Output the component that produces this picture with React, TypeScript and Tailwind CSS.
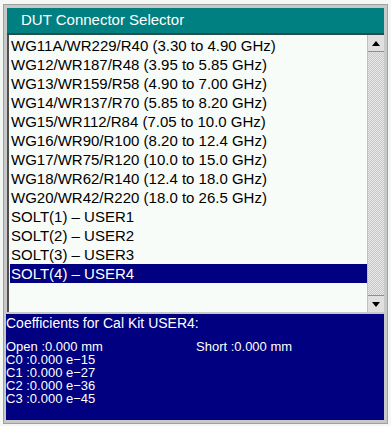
import React from "react";

const items = [
  "WG11A/WR229/R40 (3.30 to 4.90 GHz)",
  "WG12/WR187/R48 (3.95 to 5.85 GHz)",
  "WG13/WR159/R58 (4.90 to 7.00 GHz)",
  "WG14/WR137/R70 (5.85 to 8.20 GHz)",
  "WG15/WR112/R84 (7.05 to 10.0 GHz)",
  "WG16/WR90/R100 (8.20 to 12.4 GHz)",
  "WG17/WR75/R120 (10.0 to 15.0 GHz)",
  "WG18/WR62/R140 (12.4 to 18.0 GHz)",
  "WG20/WR42/R220 (18.0 to 26.5 GHz)",
  "SOLT(1) \u2013 USER1",
  "SOLT(2) \u2013 USER2",
  "SOLT(3) \u2013 USER3",
  "SOLT(4) \u2013 USER4",
];

const coeffs = [
  "C0 :0.000 e\u221215",
  "C1 :0.000 e\u221227",
  "C2 :0.000 e\u221236",
  "C3 :0.000 e\u221245",
];

export default function App() {
  return (
    <div
      className="w-[391px] h-[426px] bg-[#f4f8f4] pt-[4px] pl-[3px] overflow-hidden"
      style={{ fontFamily: '"Liberation Sans", Arial, sans-serif' }}
    >
      <div className="w-[385px] h-[420px] bg-[#c8c8c8] border border-[#a0a0a0] p-[3px] flex flex-col">
        <div className="h-[27px] bg-[#008080] border-b-2 border-[#2a4a4a] text-white text-[15px] pl-[14px] flex items-center">
          DUT Connector Selector
        </div>
        <div className="h-[277px] flex border-l-2 border-[#505050] bg-[#f8fcf8]">
          <div className="flex-1 pt-[1px] pl-[1px] text-[15px] text-black">
            {items.map((t, i) => (
              <div
                key={i}
                className={
                  "h-[19px] leading-[19px] pl-[1px] " +
                  (i === 12 ? "bg-[#000080] text-white" : "")
                }
              >
                {t}
              </div>
            ))}
          </div>
          <div className="w-[17px] flex flex-col bg-[#dcdcdc] border-l border-[#c0c0c0]">
            <div className="h-[17px] bg-[#e0e0e0] border-b border-[#909090] flex items-center justify-center">
              <svg width="8" height="5" viewBox="0 0 8 5">
                <path d="M0 5 L4 0 L8 5 Z" fill="#000" />
              </svg>
            </div>
            <div
              className="flex-1"
              style={{
                backgroundImage:
                  "repeating-conic-gradient(#c8c8c8 0% 25%, #e8e8e8 0% 50%)",
                backgroundSize: "2px 2px",
              }}
            />
            <div className="h-[17px] bg-[#e0e0e0] border-t border-[#909090] flex items-center justify-center">
              <svg width="8" height="5" viewBox="0 0 8 5">
                <path d="M0 0 L4 5 L8 0 Z" fill="#000" />
              </svg>
            </div>
          </div>
        </div>
        <div className="flex-1 -ml-[1px] bg-[#000080] text-white text-[13px] leading-[13px] pt-[3px] border-t-2 border-[#c8c8c8]">
          <div className="text-[14px]">Coefficients for Cal Kit USER4:</div>
          <div className="h-[10px]" />
          <div className="flex">
            <div className="w-[190px]">Open :0.000 mm</div>
            <div>Short :0.000 mm</div>
          </div>
          {coeffs.map((c) => (
            <div key={c}>{c}</div>
          ))}
        </div>
      </div>
    </div>
  );
}
